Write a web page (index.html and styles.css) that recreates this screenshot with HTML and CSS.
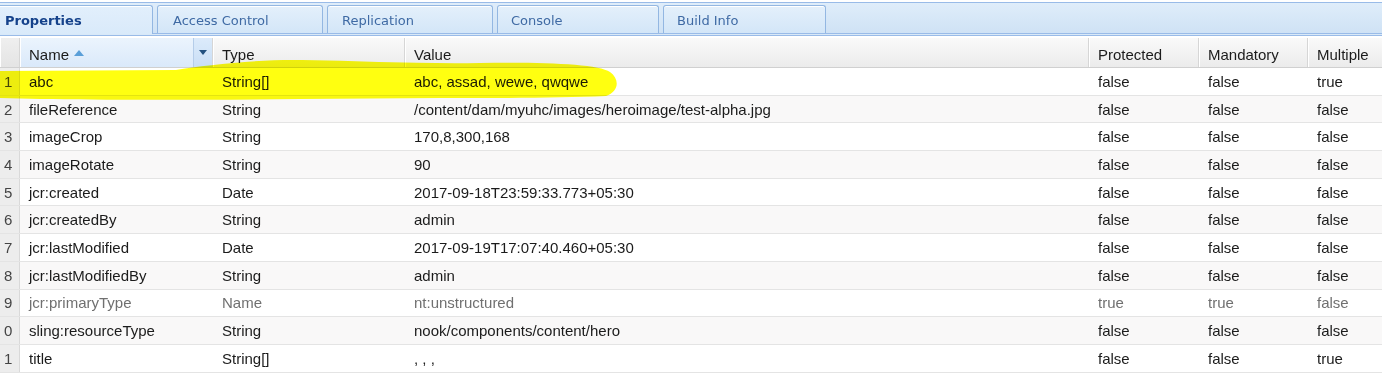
FILE: index.html
```html
<!DOCTYPE html>
<html>
<head>
<meta charset="utf-8">
<title>Properties</title>
<link rel="stylesheet" href="styles.css">
</head>
<body>
<div class="page">
  <div class="tabbar">
    <div class="tab active">Properties</div>
    <div class="tab t2">Access Control</div>
    <div class="tab t3">Replication</div>
    <div class="tab t4">Console</div>
    <div class="tab t5">Build Info</div>
  </div>
  <div class="tabbar-foot"></div>

  <div class="hrow">
    <div class="hcell hnum"></div>
    <div class="hcell hname">
      <span>Name</span>
      <svg class="sort" width="10" height="6" viewBox="0 0 10 6"><path d="M0 6 L5 0 L10 6 Z" fill="#5a9fd8"/></svg>
      <span class="hmenu"><svg width="8" height="5" viewBox="0 0 8 5"><path d="M0 0 L8 0 L4 5 Z" fill="#23507f"/></svg></span>
    </div>
    <div class="hcell">Type</div>
    <div class="hcell">Value</div>
    <div class="hcell">Protected</div>
    <div class="hcell">Mandatory</div>
    <div class="hcell last">Multiple</div>
  </div>

  <div class="rows">
    <div class="row"><div class="num">1</div><div class="cell">abc</div><div class="cell">String[]</div><div class="cell">abc, assad, wewe, qwqwe</div><div class="cell">false</div><div class="cell">false</div><div class="cell">true</div></div>
    <div class="row"><div class="num">2</div><div class="cell">fileReference</div><div class="cell">String</div><div class="cell">/content/dam/myuhc/images/heroimage/test-alpha.jpg</div><div class="cell">false</div><div class="cell">false</div><div class="cell">false</div></div>
    <div class="row"><div class="num">3</div><div class="cell">imageCrop</div><div class="cell">String</div><div class="cell">170,8,300,168</div><div class="cell">false</div><div class="cell">false</div><div class="cell">false</div></div>
    <div class="row"><div class="num">4</div><div class="cell">imageRotate</div><div class="cell">String</div><div class="cell">90</div><div class="cell">false</div><div class="cell">false</div><div class="cell">false</div></div>
    <div class="row"><div class="num">5</div><div class="cell">jcr:created</div><div class="cell">Date</div><div class="cell">2017-09-18T23:59:33.773+05:30</div><div class="cell">false</div><div class="cell">false</div><div class="cell">false</div></div>
    <div class="row"><div class="num">6</div><div class="cell">jcr:createdBy</div><div class="cell">String</div><div class="cell">admin</div><div class="cell">false</div><div class="cell">false</div><div class="cell">false</div></div>
    <div class="row"><div class="num">7</div><div class="cell">jcr:lastModified</div><div class="cell">Date</div><div class="cell">2017-09-19T17:07:40.460+05:30</div><div class="cell">false</div><div class="cell">false</div><div class="cell">false</div></div>
    <div class="row"><div class="num">8</div><div class="cell">jcr:lastModifiedBy</div><div class="cell">String</div><div class="cell">admin</div><div class="cell">false</div><div class="cell">false</div><div class="cell">false</div></div>
    <div class="row dim"><div class="num">9</div><div class="cell">jcr:primaryType</div><div class="cell">Name</div><div class="cell">nt:unstructured</div><div class="cell">true</div><div class="cell">true</div><div class="cell">false</div></div>
    <div class="row"><div class="num">0</div><div class="cell">sling:resourceType</div><div class="cell">String</div><div class="cell">nook/components/content/hero</div><div class="cell">false</div><div class="cell">false</div><div class="cell">false</div></div>
    <div class="row"><div class="num">1</div><div class="cell">title</div><div class="cell">String[]</div><div class="cell">, , ,</div><div class="cell">false</div><div class="cell">false</div><div class="cell">true</div></div>
  </div>

  <svg class="marker" width="630" height="100" viewBox="0 0 630 100">
    <path d="M0 69 L176 68 C205 63 262 57 302 58 C362 59 420 62 480 61 C545 60 598 62 610 70 C620 77 619 90 606 94 C560 96 500 96 440 96 L300 97 C200 98 100 98 40 97 L0 96 Z" fill="#ffff10"/>
  </svg>
</div>
</body>
</html>
```

FILE: styles.css
```css
body {
  margin: 0;
  background: #ffffff;
  font-family: "Liberation Sans", Arial, sans-serif;
  font-size: 15px;
  color: #1b1b1b;
}

.page {
  position: relative;
}

/* ---------- tab strip ---------- */
.tabbar {
  margin-top: 2px;
  height: 32px;
  box-sizing: border-box;
  border-top: 1px solid #99bbe8;
  border-bottom: 1px solid #99bbe8;
  padding-top: 2px;
  background: linear-gradient(#dfedfa, #cfe2f5);
  display: flex;
  align-items: flex-start;
  gap: 4px;
}

.tab {
  width: 164px;
  height: 28px;
  box-sizing: border-box;
  border: 1px solid #93b7e2;
  border-bottom: none;
  border-radius: 3px 3px 0 0;
  background: linear-gradient(#e4f0fb, #d3e6f8);
  box-shadow: inset 0 1px 0 #ffffff;
  font-family: "DejaVu Sans", Verdana, sans-serif;
  font-size: 13px;
  line-height: 29px;
  color: #3f6aa4;
  padding-left: 13px;
}

.tab.t2 { width: 166px; padding-left: 15px; }
.tab.t3 { width: 166px; padding-left: 14px; }
.tab.t4 { width: 162px; }
.tab.t5 { width: 163px; }

.tab.active {
  width: 153px;
  height: 29px;
  position: relative;
  z-index: 1;
  border-left: none;
  border-radius: 0 3px 0 0;
  padding-left: 5px;
  font-weight: bold;
  color: #15428b;
  background: linear-gradient(#e2effc, #d9eafa);
}

.tabbar-foot {
  height: 2px;
  box-sizing: border-box;
  background: #d9e9f8;
  border-bottom: 1px solid #99bbe8;
  margin-bottom: 2px;
}

/* ---------- grid header ---------- */
.hrow,
.row {
  display: grid;
  grid-template-columns: 20px 193px 192px 684px 110px 109px 1fr;
}

.hrow {
  height: 30px;
  box-sizing: border-box;
  border-bottom: 1px solid #d0d0d0;
}

.hcell {
  background: linear-gradient(#fafafa, #ebebeb);
  border-right: 1px solid #d6d6d6;
  box-shadow: inset 1px 0 0 #ffffff;
  padding-left: 9px;
  padding-top: 3px;
  box-sizing: border-box;
  display: flex;
  align-items: center;
  color: #1b1b1b;
  white-space: nowrap;
}

.hcell.last {
  border-right: none;
}

.hcell.hnum {
  padding-left: 0;
  background: linear-gradient(#efefef, #e4e4e4);
}

.hcell.hname {
  background: linear-gradient(#ebf4fd, #dae9fa);
  padding-right: 0;
  padding-top: 0;
}

.hname > span:first-child {
  padding-top: 3px;
}

.sort {
  margin-left: 5px;
  margin-top: 1px;
}

.hmenu {
  margin-left: auto;
  width: 19px;
  height: 100%;
  box-sizing: border-box;
  border-left: 1px solid #b5cde9;
  background: linear-gradient(#dcebfb, #c9def5);
  display: flex;
  align-items: center;
  justify-content: center;
}

/* ---------- grid rows ---------- */
.row {
  height: 27.7px;
  box-sizing: border-box;
  border-bottom: 1px solid #e4e4e4;
  align-items: center;
}

.row:nth-child(even) {
  background: #f9f8f8;
}

.row.dim {
  color: #707070;
}

.cell {
  padding-left: 9px;
  white-space: nowrap;
  overflow: hidden;
}

.num {
  height: 100%;
  box-sizing: border-box;
  background: #ededed;
  border-right: 1px solid #d9d9d9;
  padding-left: 4px;
  display: flex;
  align-items: center;
  color: #444444;
}

/* ---------- highlighter stroke ---------- */
.marker {
  position: absolute;
  left: 0;
  top: 0;
  pointer-events: none;
  mix-blend-mode: multiply;
}
```
